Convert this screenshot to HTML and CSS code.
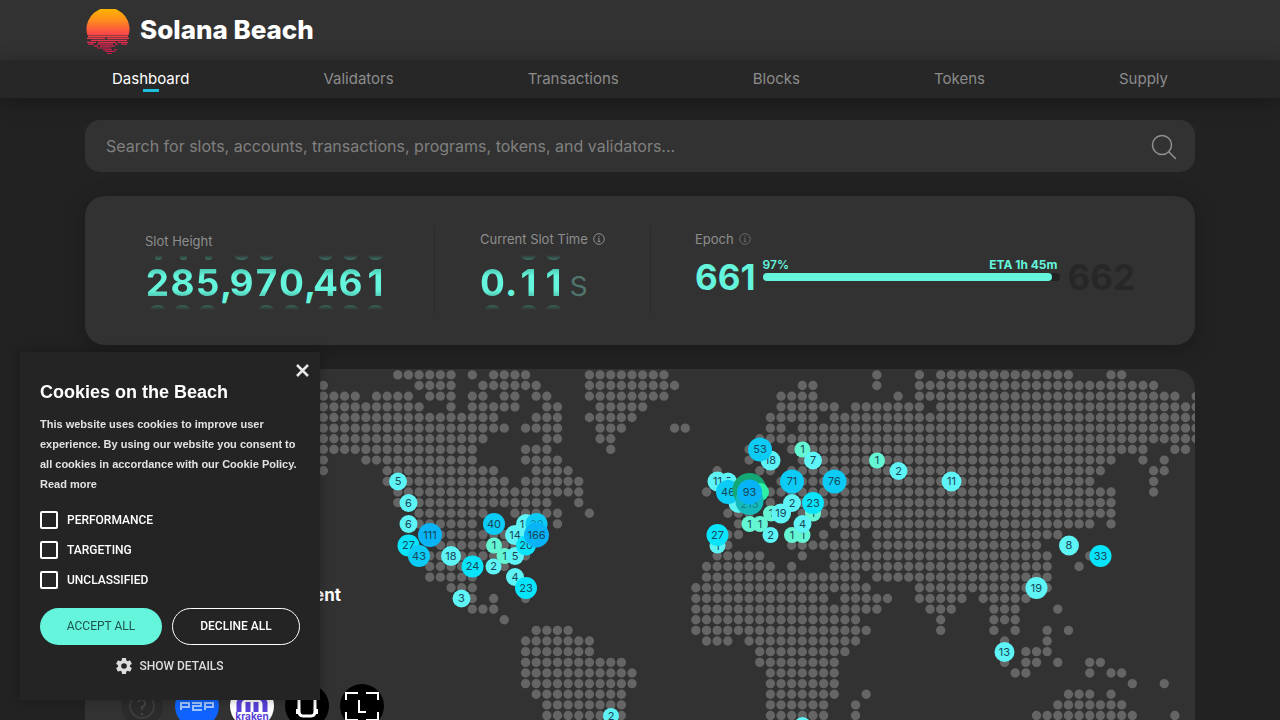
FILE: index.html
```html
<!DOCTYPE html>
<html lang="en">
<head>
<meta charset="utf-8">
<title>Solana Beach</title>
<link rel="stylesheet" href="styles.css">
</head>
<body>
<header class="header">
  <div class="container brand-row">
    <a class="brand" href="#">
      <svg class="brand-logo" width="46" height="46" viewBox="0 0 46 46" aria-hidden="true">
        <defs><linearGradient id="sun" x1="0" y1="0" x2="0" y2="46" gradientUnits="userSpaceOnUse"><stop offset="0" stop-color="#ffb400"/><stop offset=".25" stop-color="#ff8c1e"/><stop offset=".5" stop-color="#fb5044"/><stop offset=".75" stop-color="#e02850"/><stop offset="1" stop-color="#c81c4c"/></linearGradient></defs>
        <g fill="url(#sun)">
          <path d="M2.300 26A21.500 21.500 0 1 1 43.700 26Z"/>
          <path d="M3 26.500h40v1.700H3zM2 28.800h18v1.300H2zM22 28.800h22v1.300H22zM6 30.800h36v1.200H6zM2 32.700h9v1.200H2zM13 32.700h18v1.200H13zM33 32.700h10v1.200H33zM3 34.600h6v1.200H3zM12 34.600h16v1.200H12zM30 34.600h3v1.200h-3zM36 34.600h6v1.200H36zM9 36.600h4v1.100H9zM15 36.600h15v1.100H15zM12 38.500h14v1.100H12zM18 40.300h9v1.100h-9zM29 40.300h3v1.100h-3zM20 42h10v1.100H20zM22 43.900h5v1h-5z"/>
        </g>
      </svg>
      <span class="brand-name">Solana Beach</span>
    </a>
  </div>
</header>
<nav class="nav" aria-label="Main">
  <div class="container nav-row">
    <a class="nav-link active" href="#">Dashboard</a>
    <a class="nav-link" href="#">Validators</a>
    <a class="nav-link" href="#">Transactions</a>
    <a class="nav-link" href="#">Blocks</a>
    <a class="nav-link" href="#">Tokens</a>
    <a class="nav-link" href="#">Supply</a>
  </div>
</nav>
<main class="container main">
  <form class="search" role="search">
    <input class="search-input" type="text" aria-label="Search" placeholder="Search for slots, accounts, transactions, programs, tokens, and validators...">
    <button class="search-button" type="submit" aria-label="Search">
      <svg width="26" height="26" viewBox="0 0 26 26" fill="none" stroke="currentColor" stroke-width="1.500" stroke-linecap="round"><circle cx="11" cy="11" r="9.500"/><path d="M18 18l6.500 6.500"/></svg>
    </button>
  </form>

  <section class="stats">
    <div class="stat stat-height">
      <h2 class="label">Slot Height</h2>
      <div class="odometer">
        <span class="reel small-top">2</span><span class="reel small-top">8</span><span class="reel small-top">5</span><span class="mark">,</span><span class="reel no-bottom">9</span><span class="reel">7</span><span class="reel no-top">0</span><span class="mark">,</span><span class="reel">4</span><span class="reel">6</span><span class="reel">1</span>
      </div>
    </div>
    <div class="stat stat-time">
      <h2 class="label">Current Slot Time
        <svg class="info" width="12" height="12" viewBox="0 0 12 12" fill="none" stroke="currentColor" aria-hidden="true"><circle cx="6" cy="6" r="5.300"/><path d="M6 3v1.200M5 5.500h1v3M4.700 8.500h2.600"/></svg></h2>
      <div class="odometer">
        <span class="reel no-top">0</span><span class="mark point">.</span><span class="reel">1</span><span class="reel">1</span><span class="unit">s</span>
      </div>
    </div>
    <div class="stat stat-epoch">
      <h2 class="label">Epoch
        <svg class="info dim" width="12" height="12" viewBox="0 0 12 12" fill="none" stroke="currentColor" aria-hidden="true"><circle cx="6" cy="6" r="5.300"/><path d="M6 3v1.200M5 5.500h1v3M4.700 8.500h2.600"/></svg></h2>
      <div class="epoch">
        <span class="epoch-now">661</span>
        <div class="progress">
          <div class="progress-text"><span>97%</span><strong>ETA 1h 45m</strong></div>
          <div class="track"><div class="fill" style="width:97%"></div></div>
        </div>
        <span class="epoch-next">662</span>
      </div>
    </div>
  </section>

  <section class="map-card">
    <svg class="map" viewBox="85 369 1110 500" preserveAspectRatio="xMinYMin slice" role="img" aria-label="Validator locations">
      <path class="land" transform="translate(323.300 374.900) scale(10.645)" d="M7 0H12.100M14 0h.1M16 0H19.100M25 0H32.100M52 0h.1M56 0h.1M58 0H70.100M74 0H75.100
M0 1h.1M9 1H12.100M15 1H20.100M25 1H33.100M45 1H46.100M52 1h.1M56 1H78.100
M0 2H3.100M5 2H8.100M10 2H12.100M14 2H15.100M17 2H18.100M20 2H21.100M25 2H32.100M43 2H46.100M54 2h.1M56 2H80.100M82 2h.1
M0 3H9.100M12 3h.1M14 3H18.100M21 3H22.100M26 3H30.100M43 3H48.100M50 3H56.100M58 3H82.100
M0 4H16.100M20 4H22.100M25 4H29.100M42 4H46.100M48 4H82.100
M0 5H17.100M19 5H22.100M26 5H28.100M33 5H34.100M42 5H43.100M45 5H82.100
M0 6H15.100M21 6H22.100M26 6H27.100M41 6H82.100
M0 7H14.100M19 7H21.100M27 7h.1M40 7h.1M44 7H77.100M80 7H81.100
M0 8h.1M4 8H14.100M19 8H22.100M40 8h.1M45 8H74.100M77 8h.1M79 8h.1
M0 9h.1M6 9H16.100M20 9H23.100M37 9h.1M41 9H42.100M44 9H73.100M78 9H79.100
M6 10H17.100M19 10H24.100M43 10H72.100M78 10h.1
M7 11H24.100M36 11h.1M42 11H74.100M78 11h.1
M7 12h.1M9 12H21.100M24 12h.1M42 12h.1M45 12H74.100
M9 13H15.100M18 13H22.100M25 13h.1M38 13H40.100M45 13h.1M47 13H74.100
M9 14H14.100M22 14h.1M39 14h.1M48 14H72.100M74 14h.1
M11 15H18.100M38 15H39.100M47 15h.1M49 15H50.100M52 15H69.100
M11 16H19.100M38 16h.1M44 16H50.100M52 16H67.100
M10 17H19.100M37 17H41.100M45 17h.1M48 17H68.100M72 17h.1
M10 18H14.100M17 18h.1M36 18H42.100M44 18h.1M48 18H68.100M71 18h.1
M10 19H14.100M36 19H50.100M52 19H68.100
M12 20H14.100M35 20H51.100M56 20H68.100
M14 21h.1M16 21h.1M19 21h.1M35 21H47.100M49 21H53.100M56 21H60.100M62 21H66.100
M14 22H16.100M35 22H52.100M57 22H59.100M63 22H65.100M69 22h.1
M17 23h.1M35 23H50.100M58 23h.1M63 23H65.100
M20 24H23.100M35 24H51.100M58 24h.1M63 24h.1M65 24h.1M68 24h.1M70 24h.1
M19 25H25.100M36 25H38.100M40 25H50.100M64 25h.1M68 25h.1
M19 26H25.100M41 26H49.100M66 26H68.100
M19 27H28.100M41 27H48.100M64 27h.1M66 27H67.100M69 27h.1M72 27H73.100
M19 28H29.100M42 28H48.100M65 28H66.100M72 28h.1M74 28H75.100
M19 29H29.100M42 29H48.100M76 29h.1M79 29h.1
M20 30H28.100M42 30H48.100M51 30h.1M70 30H72.100M74 30h.1
M21 31H28.100M42 31H47.100M50 31h.1M69 31H75.100
M21 32H28.100M42 32H47.100M50 32h.1M67 32H76.100M80 32h.1
M21 33H27.100M42 33H47.100M67 33H77.100"/>
      <g class="pins">
        <circle class="p2" cx="398" cy="481.500" r="9"/><text x="398" y="481">5</text>
        <circle class="p2" cx="408.500" cy="503" r="9"/><text x="408.500" y="503">6</text>
        <circle class="p2" cx="408.500" cy="524" r="9"/><text x="408.500" y="524">6</text>
        <circle class="p3" cx="408.500" cy="545.500" r="11"/><text x="408.500" y="545">27</text>
        <circle class="p5" cx="430" cy="535" r="12"/><text x="430" y="535">111</text>
        <circle class="p4" cx="419" cy="556" r="11"/><text x="419" y="556">43</text>
        <circle class="p2" cx="451" cy="556" r="10"/><text x="451" y="556">18</text>
        <circle class="p3" cx="472.500" cy="566.500" r="11"/><text x="472.500" y="566">24</text>
        <circle class="p2" cx="461.500" cy="598.500" r="9"/><text x="461.500" y="598">3</text>
        <circle class="p4" cx="494" cy="524" r="11"/><text x="494" y="524">40</text>
        <circle class="p1" cx="494" cy="545.500" r="8"/><text x="494" y="545">1</text>
        <circle class="p2" cx="493.500" cy="566.500" r="8"/><text x="493.500" y="566">2</text>
        <circle class="p1" cx="504.500" cy="556" r="8"/><text x="504.500" y="556">1</text>
        <circle class="p2" cx="515" cy="556" r="9"/><text x="515" y="556">5</text>
        <circle class="p2" cx="515" cy="577" r="9"/><text x="515" y="577">4</text>
        <circle class="p3" cx="526" cy="588" r="11"/><text x="526" y="588">23</text>
        <circle class="p2" cx="526" cy="524" r="10"/><text x="522" y="524">1</text>
        <circle class="p2" cx="515" cy="535" r="10"/><text x="515" y="535">14</text>
        <circle class="p3" cx="526" cy="545.500" r="10"/><text x="526" y="545">20</text>
        <circle class="p4" cx="536.500" cy="524" r="11"/><text class="faint" x="536.500" y="524">30</text>
        <circle class="p5" cx="536.500" cy="535" r="12.500"/><text x="536.500" y="535">166</text>

        <circle class="p2" cx="770.500" cy="460.500" r="10"/><text x="770.500" y="460">18</text>
        <circle class="p4" cx="760" cy="449.500" r="12"/><text x="760" y="449">53</text>
        <circle class="p1" cx="802.500" cy="449.500" r="8"/><text x="802.500" y="449">1</text>
        <circle class="p2" cx="813" cy="460.500" r="9"/><text x="813" y="460">7</text>
        <circle class="p2" cx="728" cy="481.500" r="9"/><text x="728" y="481">5</text>
        <circle class="p2" cx="717.500" cy="481.500" r="10"/><text x="717.500" y="481">11</text>
        <circle class="p2" cx="738.500" cy="503" r="10"/>
        <circle class="p4" cx="728" cy="492" r="12"/><text x="728" y="492">46</text>
        <circle class="glow" cx="749.500" cy="490" r="17"/>
        <circle class="p1 vivid" cx="760" cy="492" r="9"/>
        <circle class="p6" cx="749.500" cy="501" r="14"/><text class="faint" x="749.500" y="504">213</text>
        <circle class="p5" cx="749.500" cy="492" r="12.500"/><text x="749.500" y="492">93</text>
        <circle class="p4" cx="792" cy="481.500" r="12"/><text x="792" y="481">71</text>
        <circle class="p4" cx="834.500" cy="481.500" r="12"/><text x="834.500" y="481">76</text>
        <circle class="p1" cx="771" cy="513.500" r="8"/><text x="771" y="513">1</text>
        <circle class="p2" cx="781" cy="513.500" r="10"/><text x="781" y="513">19</text>
        <circle class="p2" cx="792" cy="503" r="9"/><text x="792" y="503">2</text>
        <circle class="p1" cx="813" cy="513.500" r="8"/><text x="813" y="513">1</text>
        <circle class="p3" cx="813" cy="503" r="11"/><text x="813" y="503">23</text>
        <circle class="p1" cx="749.500" cy="524" r="8"/><text x="749.500" y="524">1</text>
        <circle class="p1" cx="760" cy="524" r="8"/><text x="760" y="524">1</text>
        <circle class="p2" cx="770.500" cy="535" r="8"/><text x="770.500" y="535">2</text>
        <circle class="p1" cx="792" cy="535" r="8"/><text x="792" y="535">1</text>
        <circle class="p1" cx="802.500" cy="535" r="8"/><text x="803" y="535">1</text>
        <circle class="p2" cx="802.500" cy="524" r="9"/><text x="802.500" y="524">4</text>
        <circle class="p2" cx="717.500" cy="545.500" r="8"/><text x="717.500" y="546">1</text>
        <circle class="p3" cx="717.500" cy="535" r="11"/><text x="717.500" y="535">27</text>
        <circle class="p1" cx="877" cy="460.500" r="8"/><text x="877" y="460">1</text>
        <circle class="p2" cx="898.500" cy="471" r="9"/><text x="898.500" y="471">2</text>
        <circle class="p2" cx="951.500" cy="481.500" r="10"/><text x="951.500" y="481">11</text>
        <circle class="p2" cx="1069" cy="545.500" r="10"/><text x="1069" y="545">8</text>
        <circle class="p3" cx="1100.500" cy="556" r="11"/><text x="1100.500" y="556">33</text>
        <circle class="p2" cx="1036.500" cy="588" r="11"/><text x="1036.500" y="588">19</text>
        <circle class="p2" cx="1004.500" cy="652" r="10"/><text x="1004.500" y="652">13</text>
        <circle class="p2" cx="611" cy="716" r="8"/><text x="611" y="716">2</text>
        <circle class="p2" cx="802.500" cy="726" r="9"/>
      </g>
    </svg>
    <div class="map-info">
      <h3 class="map-title">Investment</h3>
      <div class="logos" aria-hidden="true">
        <svg width="44" height="44" viewBox="0 0 44 44"><circle cx="22" cy="22" r="21" fill="#2b2b2b"/><circle cx="22" cy="22" r="12" fill="none" stroke="#3c3c3c" stroke-width="2"/><path d="M18 18q4-5 7 0q1 3-3 5v3M22 29v2" fill="none" stroke="#444" stroke-width="2"/></svg>
        <svg width="44" height="44" viewBox="0 0 44 44"><circle cx="22" cy="22" r="22" fill="#0f62fe"/><path d="M6 26v-7h8v4H6M17 19h9v3h-8v4h9M30 26v-7h8v4h-8" fill="none" stroke="#9fc4ff" stroke-width="2"/></svg>
        <svg width="44" height="44" viewBox="0 0 44 44"><circle cx="22" cy="22" r="22" fill="#fff"/><path d="M9 28V20a13 9 0 0 1 26 0v8M18 28V18M26 28V18" fill="none" stroke="#5741d9" stroke-width="5"/><text class="kraken" x="22" y="36">kraken</text></svg>
        <svg width="44" height="44" viewBox="0 0 44 44"><circle cx="22" cy="22" r="22" fill="#000"/><path d="M14 14v13q0 5 4 5h8q4 0 4-5V14" fill="none" stroke="#fff" stroke-width="3"/><path d="M11 25h3v5h-3zM30 25h3v5h-3z" fill="#fff"/></svg>
        <svg width="44" height="44" viewBox="0 0 44 44"><circle cx="22" cy="22" r="22" fill="#000"/><path d="M6 16V9h12M26 9h12v7M6 28v8h12M26 36h12v-8M19 16v12h7" fill="none" stroke="#fff" stroke-width="2"/></svg>
      </div>
    </div>
  </section>
</main>

<aside class="cookies" role="dialog" aria-labelledby="cookie-title">
  <button class="close" type="button" aria-label="Close"><svg width="13" height="13" viewBox="0 0 13 13" fill="none" stroke="currentColor" stroke-width="2.500"><path d="M1 1l11 11M12 1L1 12"/></svg></button>
  <h2 class="cookie-title" id="cookie-title">Cookies on the Beach</h2>
  <p class="cookie-text">This website uses cookies to improve user experience. By using our website you consent to all cookies in accordance with our Cookie Policy. <a href="#">Read more</a></p>
  <div class="choices">
    <label class="choice"><input type="checkbox">PERFORMANCE</label>
    <label class="choice"><input type="checkbox">TARGETING</label>
    <label class="choice"><input type="checkbox">UNCLASSIFIED</label>
  </div>
  <div class="actions">
    <button class="accept" type="button">ACCEPT ALL</button>
    <button class="decline" type="button">DECLINE ALL</button>
  </div>
  <button class="details" type="button">
    <svg width="16" height="16" viewBox="2 2 20 20" fill="currentColor" aria-hidden="true"><path d="M19.430 12.980c.04-.32.07-.64.07-.98s-.03-.66-.07-.98l2.110-1.650c.19-.15.24-.42.12-.64l-2-3.460c-.12-.22-.39-.3-.61-.22l-2.490 1c-.52-.4-1.080-.73-1.690-.98l-.38-2.650A.49.49 0 0 0 14 2h-4c-.25 0-.46.18-.49.42l-.38 2.650c-.61.25-1.170.59-1.690.98l-2.490-1c-.23-.09-.49 0-.61.22l-2 3.460c-.13.22-.07.49.12.64l2.110 1.650c-.04.32-.07.65-.07.98s.03.66.07.98l-2.110 1.650c-.19.15-.24.42-.12.64l2 3.460c.12.22.39.3.61.22l2.490-1c.52.4 1.080.73 1.690.98l.38 2.650c.03.24.24.42.49.42h4c.25 0 .46-.18.49-.42l.38-2.650c.61-.25 1.170-.59 1.690-.98l2.490 1c.23.09.49 0 .61-.22l2-3.460c.12-.22.07-.49-.12-.64zM12 15.500a3.500 3.500 0 1 1 0-7 3.500 3.500 0 0 1 0 7z"/></svg>
    SHOW DETAILS
  </button>
</aside>
</body>
</html>
```
FILE: styles.css
```css
* { box-sizing: border-box; }

body {
  display: flex;
  flex-direction: column;
  margin: 0;
  height: 100vh;
  overflow: hidden;
  background: #222;
  color: #fff;
  font-family: Inter, sans-serif;
}

a { color: inherit; text-decoration: none; }
h2, h3, p { margin: 0; }
button { font-family: inherit; cursor: pointer; }
.container { width: 100%; max-width: 1110px; margin: 0 auto; }

.header { background: #323232; }
.brand-row { display: flex; height: 60px; align-items: center; }
.brand { display: flex; align-items: center; gap: 9px; }
.brand-logo { margin-top: 3px; }
.brand-name { font-size: 26px; font-weight: 800; line-height: 32px; }

.nav { background: #272727; box-shadow: 0 4px 20px rgba(0, 0, 0, .3); }
.nav-row { display: flex; justify-content: space-between; padding: 0 27px; }
.nav-link {
  position: relative;
  height: 38px;
  font-size: 15px;
  line-height: 38px;
  color: #8c8c8c;
}
.nav-link.active { color: #fff; }
.nav-link.active::after {
  content: "";
  position: absolute;
  left: 50%;
  bottom: 6px;
  width: 16px;
  height: 3px;
  margin-left: -8px;
  background: #1dbfdc;
}

.main { display: flex; flex: 1; flex-direction: column; gap: 24px; min-height: 0; padding-top: 22px; }

.search {
  display: flex;
  flex-shrink: 0;
  align-items: center;
  height: 52px;
  padding: 0 18px 0 21px;
  border-radius: 15px;
  background: #323232;
}
.search-input {
  flex: 1;
  padding: 0;
  border: 0;
  outline: 0;
  background: none;
  color: #fff;
  font: 16px Inter, sans-serif;
}
.search-input::placeholder { color: #808080; opacity: 1; }
.search-button { display: flex; padding: 2px 0 0; border: 0; background: none; color: #909090; }

.stats {
  display: flex;
  flex-shrink: 0;
  height: 149px;
  padding: 30px 60px;
  border-radius: 20px;
  background: #323232;
  box-shadow: 0 4px 20px rgba(0, 0, 0, .25);
}
.stat { padding-top: 4px; }
.stat + .stat { border-left: 1px solid #2b2b2b; }
.stat-height { width: 289px; padding-top: 6px; }
.stat-time { width: 216px; padding-left: 45px; }
.stat-epoch { flex: 1; padding-left: 44px; }
.label {
  display: flex;
  align-items: center;
  gap: 5px;
  color: #8e8e8e;
  font-size: 13px;
  font-weight: 400;
  line-height: 18px;
}
.info.dim { color: #666; }

.odometer {
  display: flex;
  margin-top: 6px;
  font-size: 37px;
  font-weight: 700;
  line-height: 46px;
  color: #64f5dc;
}
.stat-time .odometer { margin-top: 8px; }
.reel {
  position: relative;
  width: 25px;
  padding-top: 4px;
  background: linear-gradient(#3fae99 8px, #64f5dc 20px, #64f5dc 34px, #439e8e 46px);
  background-clip: text;
  -webkit-background-clip: text;
  color: transparent;
  text-align: center;
}
.reel::before, .reel::after {
  content: "";
  position: absolute;
  left: 5px;
  width: 15px;
  height: 5px;
}
.reel::before {
  top: -1px;
  border-radius: 0 0 8px 8px / 0 0 5px 5px;
  background: linear-gradient(#323232, #397266);
}
.reel::after {
  bottom: -4px;
  border-radius: 8px 8px 0 0 / 5px 5px 0 0;
  background: linear-gradient(#376459, #323232);
}
.small-top::before { left: 10px; width: 7px; }
.no-top::before, .no-bottom::after { content: none; }
.mark { width: 9px; padding-top: 4px; }
.mark.point { width: 11px; }
.unit { margin-left: 3px; padding-top: 4px; color: #50756d; font-weight: 300; }

.epoch { display: flex; gap: 7px; margin-top: 8px; font-size: 35px; font-weight: 700; line-height: 42px; }
.epoch-now { color: #64f5dc; }
.epoch-next { color: #272727; }
.progress { flex: 1; padding-top: 1px; color: #64f5dc; }
.progress-text { display: flex; justify-content: space-between; padding-right: 3px; font-size: 12px; font-weight: 600; line-height: 16px; }
.progress-text strong { font-weight: 700; }
.track { height: 8px; border-radius: 4px; background: #222; }
.fill { height: 8px; border-radius: 4px; background: #64f5dc; }

.map-card { position: relative; flex: 1; min-height: 0; overflow: hidden; border-radius: 20px 20px 0 0; background: #323232; }
.map { display: block; width: 100%; }
.land { fill: none; stroke: #656565; stroke-width: .88; stroke-linecap: round; stroke-dasharray: 0 1; }
.pins text { fill: #17475a; font: 11px Inter, sans-serif; text-anchor: middle; dominant-baseline: central; }
.pins .faint { opacity: .5; }
.p1 { fill: #64f5d2; }
.p2 { fill: #5ef3f5; }
.p3 { fill: #0ae4fa; }
.p4 { fill: #0cccf5; }
.p5 { fill: #08b4f5; }
.p6 { fill: #14b9bc; }
.glow { fill: #14a874; }
.vivid { fill: #2df0a8; }

.map-info {
  position: absolute;
  top: 214px;
  left: 35px;
  display: flex;
  flex-direction: column;
  gap: 77px;
}
.map-title { width: 221px; font-size: 17px; line-height: 24px; text-align: right; }
.logos { display: flex; gap: 11px; }
.kraken { fill: #5741d9; font: 700 10px Inter, sans-serif; text-anchor: middle; }

.cookies {
  position: fixed;
  left: 20px;
  bottom: 20px;
  width: 300px;
  padding: 28px 20px 25px;
  background: #242424;
  box-shadow: 0 0 10px rgba(0, 0, 0, .3);
  font-family: "Liberation Sans", Arial, sans-serif;
}
.close { position: absolute; top: 12px; right: 11px; display: flex; padding: 0; border: 0; background: none; color: #e8e8e8; }
.cookie-title { font-size: 18px; line-height: 24px; }
.cookie-text { margin-top: 10px; color: #e2e2e2; font-size: 11px; font-weight: 700; line-height: 20px; }
.choices { display: flex; flex-direction: column; gap: 12px; margin-top: 17px; }
.choice { display: flex; align-items: center; gap: 9px; height: 18px; font-family: Roboto, sans-serif; font-size: 12px; font-weight: 500; }
.choice input { appearance: none; width: 18px; height: 18px; margin: 0; border: 2px solid #fff; border-radius: 2px; }
.actions { display: flex; gap: 10px; margin-top: 19px; }
.accept, .decline { height: 37px; padding: 0 0 2px; border-radius: 19px; font-family: Roboto, sans-serif; font-size: 12px; font-weight: 500; }
.accept { width: 122px; border: 0; background: #64f5dc; color: #20544c; font-weight: 400; }
.decline { flex: 1; border: 1px solid #fff; background: none; color: #fff; }
.details { display: flex; align-items: center; gap: 7px; margin: 12px auto 0; padding: 0; border: 0; background: none; color: #ddd; font-family: Roboto, sans-serif; font-size: 12px; font-weight: 500; line-height: 18px; }
```
